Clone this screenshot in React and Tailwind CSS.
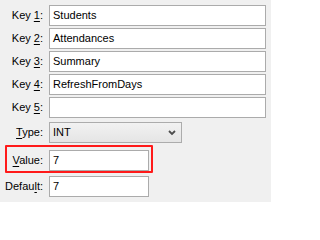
import React from 'react';

function Label({ before, hot, after }) {
  return (
    <div className="w-[45px] shrink-0 pr-[2px] text-right">
      {before}
      <span className="underline underline-offset-[2px]">{hot}</span>
      {after}
    </div>
  );
}

function TextRow({ label, value, wide = true }) {
  return (
    <div className="flex h-[21px] items-center">
      <Label {...label} />
      <div className={`ml-[4px] flex h-[21px] items-center border border-[#ababab] bg-white pl-[3px] ${wide ? 'w-[217px]' : 'w-[100px]'}`}>
        {value}
      </div>
    </div>
  );
}

export default function App() {
  return (
    <div
      className="relative h-[202px] w-[271px] bg-[#f0f0f0] pt-[5px] text-[11px] text-black"
      style={{ fontFamily: '"Liberation Sans", Arial, sans-serif' }}
    >
      <div className="flex flex-col gap-[2px]">
        <TextRow label={{ before: 'Key ', hot: '1', after: ':' }} value="Students" />
        <TextRow label={{ before: 'Key ', hot: '2', after: ':' }} value="Attendances" />
        <TextRow label={{ before: 'Key ', hot: '3', after: ':' }} value="Summary" />
        <TextRow label={{ before: 'Key ', hot: '4', after: ':' }} value="RefreshFromDays" />
        <TextRow label={{ before: 'Key ', hot: '5', after: ':' }} value="" />
      </div>

      {/* type combo */}
      <div className="mt-[4px] flex h-[21px] items-center">
        <Label before="" hot="T" after="ype:" />
        <div className="ml-[4px] flex h-[21px] w-[133px] items-center justify-between border border-[#acacac] bg-gradient-to-b from-[#f2f2f2] to-[#e5e5e5] pl-[3px] pr-[5px]">
          <span>INT</span>
          <svg width="8" height="6" viewBox="0 0 8 6" className="mt-[1px]">
            <path d="M1 1 L4 4 L7 1" fill="none" stroke="#4d4d4d" strokeWidth="1.8" />
          </svg>
        </div>
      </div>

      <div className="mt-[7px]">
        <TextRow label={{ before: '', hot: 'V', after: 'alue:' }} value="7" wide={false} />
      </div>
      <div className="mt-[5px]">
        <TextRow label={{ before: 'Defau', hot: 'l', after: 't:' }} value="7" wide={false} />
      </div>

      {/* highlight annotation */}
      <div className="pointer-events-none absolute left-[5px] top-[145px] h-[28px] w-[148px] rounded-[1px] border-2 border-[#ff1a1a]" />
    </div>
  );
}
